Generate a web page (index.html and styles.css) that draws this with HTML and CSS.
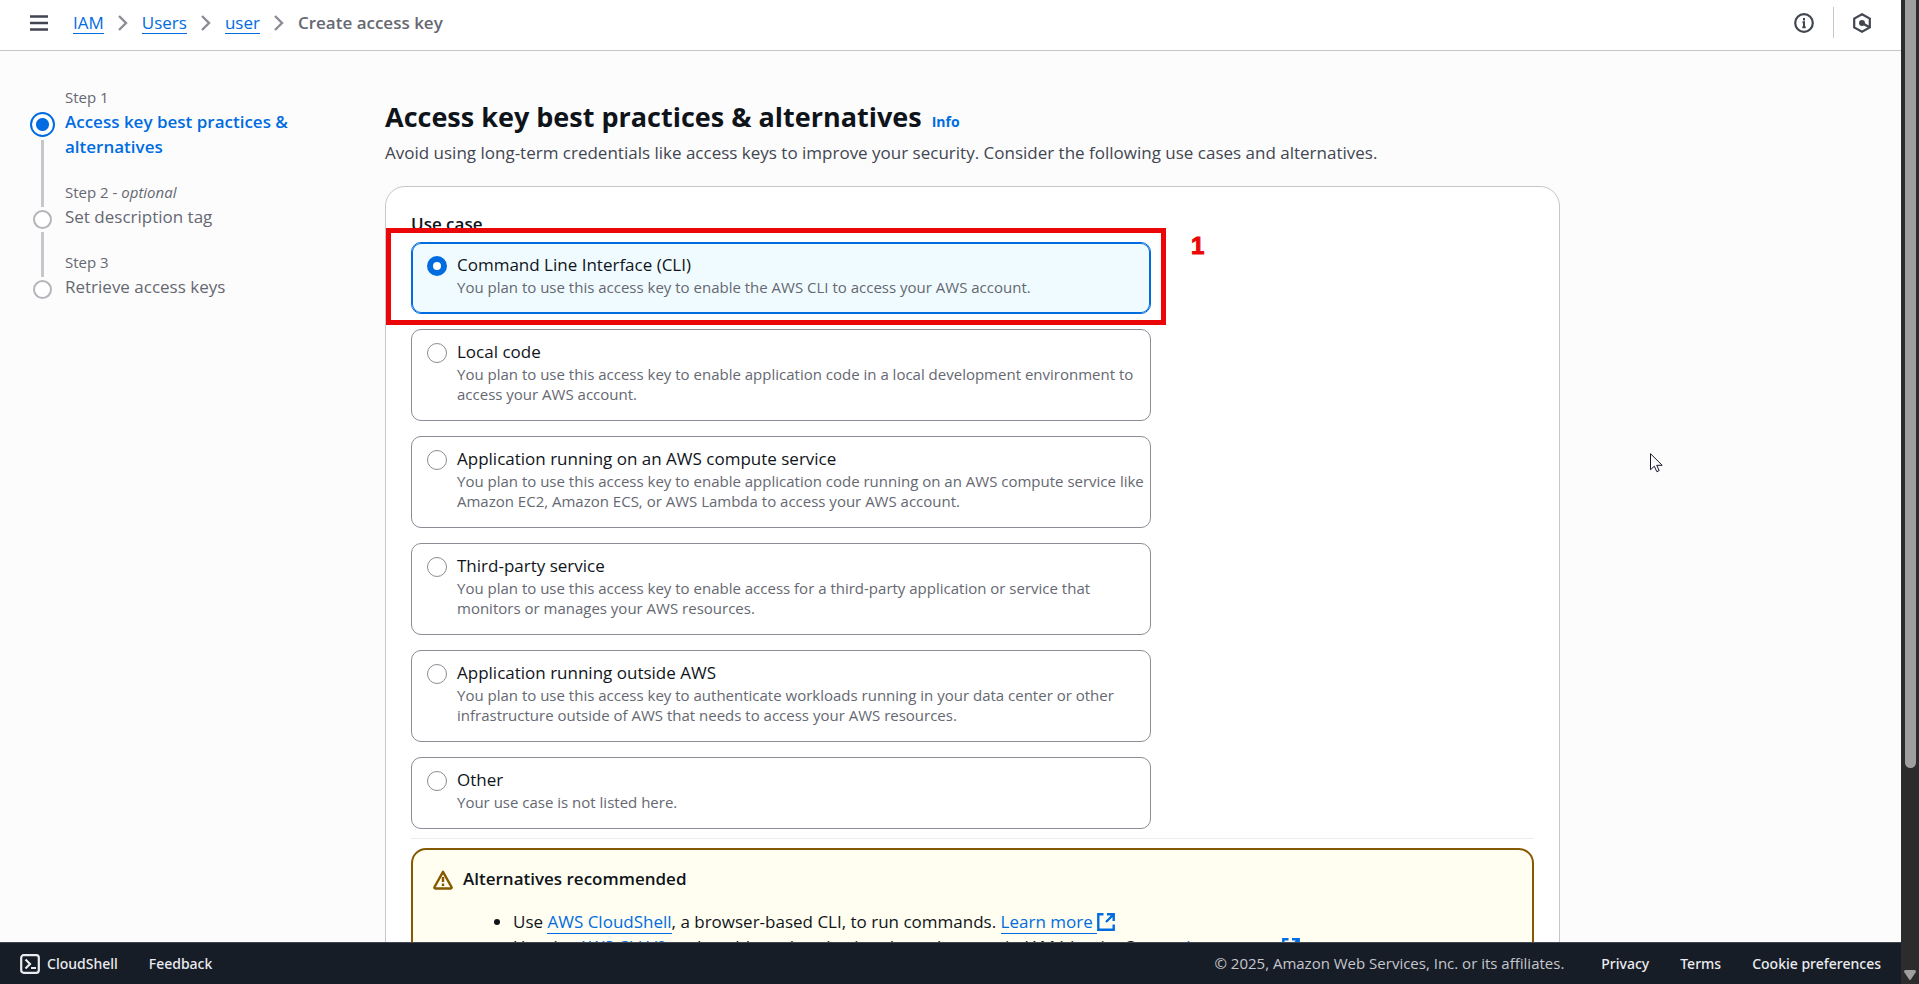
FILE: index.html
```html
<!DOCTYPE html>
<html lang="en">
<head>
<meta charset="utf-8">
<title>Create access key | IAM</title>
<link rel="stylesheet" href="styles.css">
</head>
<body>
<div class="app">
  <div class="page">
    <header class="topbar">
      <button class="icon-button" aria-label="Open navigation">
        <svg width="18" height="16" viewBox="0 0 18 16"><path d="M0 1.5h18M0 8h18M0 14.5h18" stroke="#424650" stroke-width="2.5"/></svg>
      </button>
      <nav class="crumbs" aria-label="Breadcrumbs">
        <a class="link" href="#iam">IAM</a>
        <svg class="chevron" width="10" height="16" viewBox="0 0 10 16"><path d="M1 1l7 7-7 7"/></svg>
        <a class="link" href="#users">Users</a>
        <svg class="chevron" width="10" height="16" viewBox="0 0 10 16"><path d="M1 1l7 7-7 7"/></svg>
        <a class="link" href="#user">user</a>
        <svg class="chevron" width="10" height="16" viewBox="0 0 10 16"><path d="M1 1l7 7-7 7"/></svg>
        <span class="crumb-current">Create access key</span>
      </nav>
      <div class="tools">
        <button class="icon-button" aria-label="Info">
          <svg width="20" height="20" viewBox="0 0 20 20"><circle cx="10" cy="10" r="8.8" fill="none" stroke="#424650" stroke-width="2.2"/><path d="M10 5v2.400M8.500 9.200H10V15M8.300 14.300h3.400" fill="none" stroke="#424650" stroke-width="2"/></svg>
        </button>
        <span class="tools-divider"></span>
        <button class="icon-button" aria-label="Diagnostics">
          <svg width="18" height="20" viewBox="0 0 18 20"><path d="M9 1.300l7.800 4.300v8.800L9 18.700l-7.800-4.300V5.600z" fill="none" stroke="#424650" stroke-width="2.200"/><circle cx="9" cy="10" r="3" fill="#424650"/><path d="M9 10l7.500 4.200" stroke="#424650" stroke-width="2.400"/></svg>
        </button>
      </div>
    </header>

    <div class="body">
      <nav class="steps" aria-label="Steps">
        <ol class="step-list">
          <li class="step step-active">
            <span class="rail"><span class="dot"></span><span class="line"></span></span>
            <div class="step-text"><div class="step-no">Step 1</div><a class="step-name" href="#step1">Access key best practices &amp; alternatives</a></div>
          </li>
          <li class="step">
            <span class="rail"><span class="dot"></span><span class="line"></span></span>
            <div class="step-text"><div class="step-no">Step 2 - <i>optional</i></div><div class="step-name">Set description tag</div></div>
          </li>
          <li class="step">
            <span class="rail"><span class="dot"></span></span>
            <div class="step-text"><div class="step-no">Step 3</div><div class="step-name">Retrieve access keys</div></div>
          </li>
        </ol>
      </nav>

      <main class="main">
        <div class="heading"><h1 class="title">Access key best practices &amp; alternatives</h1><a class="info" href="#info">Info</a></div>
        <p class="lead">Avoid using long-term credentials like access keys to improve your security. Consider the following use cases and alternatives.</p>

        <section class="card">
          <fieldset class="tiles">
            <legend class="legend">Use case</legend>
            <label class="tile tile-selected"><input class="radio" type="radio" name="usecase" checked>
              <span class="tile-text"><span class="tile-title">Command Line Interface (CLI)</span><span class="tile-desc">You plan to use this access key to enable the AWS CLI to access your AWS account.</span></span>
              <span class="callout" aria-hidden="true"><span class="callout-no">1</span></span>
            </label>
            <label class="tile"><input class="radio" type="radio" name="usecase">
              <span class="tile-text"><span class="tile-title">Local code</span><span class="tile-desc">You plan to use this access key to enable application code in a local development environment to access your AWS account.</span></span></label>
            <label class="tile"><input class="radio" type="radio" name="usecase">
              <span class="tile-text"><span class="tile-title">Application running on an AWS compute service</span><span class="tile-desc">You plan to use this access key to enable application code running on an AWS compute service like Amazon EC2, Amazon ECS, or AWS Lambda to access your AWS account.</span></span></label>
            <label class="tile"><input class="radio" type="radio" name="usecase">
              <span class="tile-text"><span class="tile-title">Third-party service</span><span class="tile-desc">You plan to use this access key to enable access for a third-party application or service that monitors or manages your AWS resources.</span></span></label>
            <label class="tile"><input class="radio" type="radio" name="usecase">
              <span class="tile-text"><span class="tile-title">Application running outside AWS</span><span class="tile-desc">You plan to use this access key to authenticate workloads running in your data center or other infrastructure outside of AWS that needs to access your AWS resources.</span></span></label>
            <label class="tile"><input class="radio" type="radio" name="usecase">
              <span class="tile-text"><span class="tile-title">Other</span><span class="tile-desc">Your use case is not listed here.</span></span></label>
          </fieldset>

          <hr class="rule">

          <div class="alert">
            <svg class="alert-icon" width="20" height="20" viewBox="0 0 20 20"><path d="M10 1.800L18.500 17a1 1 0 0 1-.8 1.500H2.300A1 1 0 0 1 1.500 17z" fill="none" stroke="#855900" stroke-width="2.400" stroke-linejoin="round"/><path d="M10 7v5M10 13.600v2.400" stroke="#855900" stroke-width="2.400"/></svg>
            <div class="alert-body">
              <h2 class="alert-title">Alternatives recommended</h2>
              <ul class="alert-list">
                <li>Use <a class="link" href="#cloudshell">AWS CloudShell</a>, a browser-based CLI, to run commands. <a class="link" href="#learn">Learn more </a><svg class="external" width="18" height="18" viewBox="0 0 18 18"><path d="M6.500 1.300H1.300v15.400h15.400v-5.200M10 1.300h6.700V8M16.500 1.500L9 9"/></svg></li>
                <li>Use the <a class="link" href="#cliv2">AWS CLI V2</a> and enable authentication through a user in IAM Identity Center. <a class="link" href="#learn2">Learn more </a><svg class="external" width="18" height="18" viewBox="0 0 18 18"><path d="M6.500 1.300H1.300v15.400h15.400v-5.200M10 1.300h6.700V8M16.500 1.500L9 9"/></svg></li>
              </ul>
            </div>
          </div>
        </section>
      </main>
    </div>

    <footer class="footer">
      <button class="footer-button"><svg width="20" height="20" viewBox="0 0 20 20"><rect x="1.200" y="1.200" width="17.600" height="17.600" rx="2.500" fill="none" stroke="#ebebf0" stroke-width="2.200"/><path d="M5.500 5.500L10 10l-4.500 4.500M11 14h5" fill="none" stroke="#ebebf0" stroke-width="2.200"/></svg>CloudShell</button>
      <a class="footer-link" href="#feedback">Feedback</a>
      <span class="copyright">© 2025, Amazon Web Services, Inc. or its affiliates.</span>
      <a class="footer-link" href="#privacy">Privacy</a>
      <a class="footer-link" href="#terms">Terms</a>
      <a class="footer-link" href="#cookies">Cookie preferences</a>
    </footer>
  </div>

  <div class="scrollbar" aria-hidden="true">
    <span class="thumb"></span>
    <svg class="scroll-arrow" width="12" height="10" viewBox="0 0 12 10"><path d="M1.500 0h9a1.500 1.500 0 0 1 1.200 2.200L7 9.300a1.200 1.200 0 0 1-2 0L.3 2.200A1.500 1.500 0 0 1 1.500 0z" fill="#9f9f9f"/></svg>
  </div>
</div>
<svg class="pointer" width="13" height="20" viewBox="0 0 13 20" aria-hidden="true"><path d="M.5.700v16l3.800-3.500 2.500 5.500 2.400-1.100-2.500-5.300h5.500z" fill="#fff" stroke="#16162a"/></svg>
</body>
</html>
```
FILE: styles.css
```css
* { box-sizing: border-box; }

body {
  margin: 0;
  font-family: "Open Sans", "Noto Sans", sans-serif;
  font-size: 17px;
  line-height: 25px;
  color: #0f141a;
  background: #fcfcfd;
}

a { color: #006ce0; text-decoration: none; }
button { font: inherit; color: inherit; background: none; border: 0; padding: 0; }
h1, h2, p, ol, ul { margin: 0; padding: 0; }
svg { flex: none; }

.app { display: flex; height: 100vh; overflow: hidden; }
.page { flex: 1; min-width: 0; display: flex; flex-direction: column; }

.topbar {
  flex: none;
  display: flex;
  align-items: center;
  gap: 25px;
  padding: 0 30px 5px;
  height: 51px;
  background: #fff;
  border-bottom: 1px solid #c6c6cd;
}
.icon-button { display: flex; }
.crumbs { display: flex; align-items: center; gap: 14px; }
.link { border-bottom: 1px solid #006ce0; }
.crumbs .link { line-height: 21px; }
.chevron { fill: none; stroke: #8c8c94; stroke-width: 2.4; }
.crumb-current { font-weight: 600; color: #656871; }
.tools { margin-left: auto; display: flex; align-items: center; gap: 19px; }
.tools-divider { width: 1px; height: 31px; background: #c6c6cd; }

.body { flex: 1; min-height: 0; overflow: hidden; display: flex; }

.steps { flex: none; width: 385px; padding: 36px 80px 0 30px; }
.step-list { list-style: none; }
.step { display: flex; gap: 10px; color: #656871; }
.rail { flex: none; width: 25px; display: flex; flex-direction: column; align-items: center; padding-top: 28px; }
.dot { flex: none; width: 19px; height: 19px; border: 2px solid #b4b4bb; border-radius: 50%; background: #fff; }
.step-active .rail { padding-top: 25px; }
.step-active .dot { width: 25px; height: 25px; border-color: #006ce0; background: radial-gradient(circle, #006ce0 6px, #fff 7px); }
.line { flex: 1; width: 3px; margin: 3px 0 -25px; background: #c6c6cd; }
.step-text { flex: 1; padding-bottom: 23px; }
.step-no { font-size: 15px; line-height: 20px; margin-bottom: 2px; }
.step-name { display: block; line-height: 25px; }
.step-active .step-name { font-weight: 600; }

.main { flex: 1; max-width: 1175px; min-width: 0; padding-top: 47px; }
.heading { display: flex; align-items: baseline; gap: 10px; }
.title { font-size: 27px; line-height: 38px; font-weight: 700; }
.info { font-size: 14px; font-weight: 700; }
.lead { color: #424650; padding: 4px 0 21px; }

.card {
  border: 1px solid #c6c6cd;
  border-radius: 20px;
  background: #fff;
  padding: 24px 25px 40px;
}
.tiles {
  border: 0;
  margin: 0;
  padding: 0;
  max-width: 740px;
  display: flex;
  flex-direction: column;
  gap: 15px;
}
.legend { padding: 0; margin-bottom: 6px; font-weight: 600; }
.tile {
  position: relative;
  display: flex;
  gap: 10px;
  padding: 9px 2px 16px 15px;
  border: 1px solid #8c8c94;
  border-radius: 10px;
}
.tile-selected { border-color: #006ce0; background: #f0fbff; box-shadow: inset 0 0 0 1px #006ce0; }
.radio {
  appearance: none;
  flex: none;
  width: 20px;
  height: 20px;
  margin: 4px 0 0;
  border: 1px solid #8c8c94;
  border-radius: 50%;
  background: #fff;
}
.radio:checked { border: 6px solid #006ce0; }
.tile-text { flex: 1; min-width: 0; }
.tile-title, .tile-desc { display: block; }
.tile-desc { font-size: 15px; line-height: 20px; color: #656871; }

.callout { position: absolute; inset: -15px -16px -12px -26px; border: 5px solid #eb0707; pointer-events: none; }
.callout-no {
  position: absolute;
  left: 100%;
  top: 0;
  margin-left: 30px;
  font-family: "Liberation Sans", sans-serif;
  font-size: 24px;
  font-weight: 700;
  color: #eb0707;
  -webkit-text-stroke: 1px #eb0707;
}

.rule { border: 0; height: 1px; margin: 9px 0; background: #ebebf0; }

.alert {
  display: flex;
  gap: 10px;
  padding: 16px 20px;
  border: 2px solid #855900;
  border-radius: 15px;
  background: #fffef0;
}
.alert-icon { margin-top: 4px; }
.alert-body { flex: 1; min-width: 0; }
.alert-title { font-size: 17px; line-height: 25px; font-weight: 600; }
.alert-list { padding: 18px 0 0 50px; }
.external { fill: none; stroke: #006ce0; stroke-width: 2.4; vertical-align: -3px; }

.footer {
  flex: none;
  display: flex;
  align-items: center;
  gap: 31px;
  height: 42px;
  padding: 0 20px;
  background: #161d26;
  border-top: 1px solid #424650;
  color: #ebebf0;
  font-family: "Noto Sans", sans-serif;
  font-size: 14px;
  font-weight: 500;
}
.footer-button { display: flex; align-items: center; gap: 7px; }
.footer-link { color: #ebebf0; }
.copyright {
  margin-left: auto;
  margin-right: 6px;
  color: #c6c6cd;
  font-family: "Open Sans", sans-serif;
  font-size: 15px;
  font-weight: 400;
}

.scrollbar {
  flex: none;
  width: 18px;
  background: #2c2c2c;
  display: flex;
  flex-direction: column;
  align-items: center;
  justify-content: space-between;
}
.thumb { width: 11px; height: 78%; background: #9f9f9f; border-radius: 0 0 6px 6px; }
.scroll-arrow { margin-bottom: 4px; }

.pointer { position: absolute; left: 1650px; top: 453px; }
```
